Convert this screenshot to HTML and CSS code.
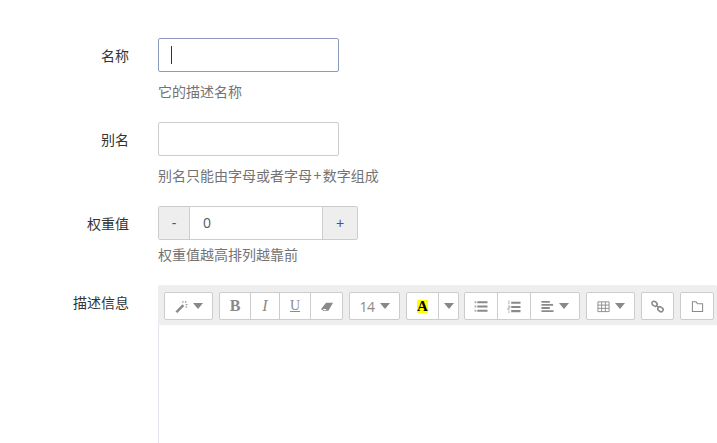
FILE: index.html
```html
<!DOCTYPE html>
<html lang="zh">
<head>
<meta charset="utf-8">
<title>表单</title>
<link rel="stylesheet" href="styles.css">
</head>
<body>
<form class="form">
  <div class="row row-name">
    <label class="label">名称</label>
    <div class="field">
      <div class="input input-focus"><span class="caret-line"></span></div>
      <p class="help">它的描述名称</p>
    </div>
  </div>
  <div class="row row-alias">
    <label class="label">别名</label>
    <div class="field">
      <div class="input"></div>
      <p class="help">别名只能由字母或者字母<span class="plus">+</span>数字组成</p>
    </div>
  </div>
  <div class="row row-weight">
    <label class="label">权重值</label>
    <div class="field">
      <div class="stepper">
        <span class="step step-minus">-</span>
        <span class="step-value">0</span>
        <span class="step step-plus">+</span>
      </div>
      <p class="help help-tight">权重值越高排列越靠前</p>
    </div>
  </div>
  <div class="row row-editor">
    <label class="label label-editor">描述信息</label>
    <div class="editor">
      <div class="toolbar">
        <div class="group">
          <span class="btn w-49"><svg class="ico" viewBox="0 0 14 14"><path d="M0.5 12.5 L8 4.5 L10 6.5 L2.5 14 Z" fill="#8a8a8a"/><path d="M8.5 1 V3 M12 1 L11 3 M13.5 5 H11.5 M13 8 L11.5 7" stroke="#a0a0a0" stroke-width="1.3" fill="none"/></svg><i class="tri"></i></span>
        </div>
        <div class="group">
          <span class="btn w-32 txt bold">B</span>
          <span class="btn w-29 txt ital">I</span>
          <span class="btn w-32 txt under">U</span>
          <span class="btn w-33"><svg class="ico ico-wide" viewBox="0 0 14 14"><path d="M0.5 10 L6 3 H13.5 L8.5 11.5 H3 Z" fill="#8a8a8a"/><path d="M2.3 9.6 H6.6 L5.6 10.8 H3.4 Z" fill="#fff"/></svg></span>
        </div>
        <div class="group">
          <span class="btn w-51"><span class="size">14</span><i class="tri"></i></span>
        </div>
        <div class="group">
          <span class="btn w-33"><span class="color-a">A</span></span>
          <span class="btn w-20"><i class="tri tri-solo"></i></span>
        </div>
        <div class="group group-pull">
          <span class="btn w-34"><svg class="ico ico-wide" viewBox="0 0 14 14"><path d="M0 2.5 H2 M0 7 H2 M0 11.5 H2" stroke="#b0b0b0" stroke-width="2.2"/><path d="M3 2.5 H14 M3 7 H14 M3 11.5 H14" stroke="#8a8a8a" stroke-width="2.2"/></svg></span>
          <span class="btn w-34"><svg class="ico ico-wide" viewBox="0 0 14 14"><path d="M1.5 0.5 V4.5 M0.5 6.5 H2.5 V8.5 H0.5 V10.5 H2.5 M0.5 13 H2.5" stroke="#a8a8a8" stroke-width="1" fill="none"/><path d="M4 3 H14 M4 7.5 H14 M4 12 H14" stroke="#8a8a8a" stroke-width="2.2"/></svg></span>
          <span class="btn w-48"><svg class="ico" viewBox="0 0 14 14"><path d="M0.5 2 H9.5 M0.5 5.3 H13 M0.5 8.6 H9.5 M0.5 12 H13.5" stroke="#8a8a8a" stroke-width="2"/></svg><i class="tri"></i></span>
        </div>
        <div class="group">
          <span class="btn w-49"><svg class="ico" viewBox="0 0 14 14"><path d="M1 2 H13 V12.5 H1 Z M1 5.5 H13 M1 9 H13 M5 2 V12.5 M9 2 V12.5" stroke="#8a8a8a" stroke-width="1" fill="none"/></svg><i class="tri"></i></span>
        </div>
        <div class="group">
          <span class="btn w-33"><svg class="ico" viewBox="0 0 14 14"><rect x="0.8" y="1.8" width="6" height="4.4" rx="2.2" transform="rotate(40 3.8 4)" stroke="#8a8a8a" stroke-width="1.7" fill="none"/><rect x="7.2" y="7.8" width="6" height="4.4" rx="2.2" transform="rotate(40 10.2 10)" stroke="#8a8a8a" stroke-width="1.7" fill="none"/><path d="M5.7 5.7 L8.3 8.3" stroke="#8a8a8a" stroke-width="1.5"/></svg></span>
        </div>
        <div class="group">
          <span class="btn w-34"><svg class="ico" viewBox="0 0 14 14"><path d="M1.5 2 H5.5 L7 4 H12.5 V12.5 H1.5 Z" stroke="#8a8a8a" stroke-width="1.1" fill="none"/></svg></span>
        </div>
      </div>
      <div class="body"></div>
    </div>
  </div>
</form>
</body>
</html>
```
FILE: styles.css
```css
* { box-sizing: border-box; }
html, body { margin: 0; padding: 0; height: 100%; overflow: hidden; background: #fff; }
body { font-family: "Noto Sans CJK SC", "Liberation Sans", sans-serif; font-size: 14px; color: #333; }
.form { padding-top: 38px; width: 717px; }
.row { display: flex; align-items: flex-start; }
.row-name, .row-alias { height: 84px; }
.row-weight { height: 79px; }
.label { width: 129px; text-align: right; padding-top: 7px; line-height: 20px; margin-right: 29px; flex: none; }
.label-editor { padding-top: 7px; }
.field { width: 300px; }
.input { width: 181px; height: 34px; border: 1px solid #ccc; border-radius: 2px; background: #fff; display: flex; align-items: center; padding-left: 12px; }
.input-focus { border-color: #8c9bbd; }
.caret-line { width: 1px; height: 18px; background: #333; }
.help { margin: 9px 0 0; color: #737373; line-height: 20px; white-space: nowrap; }
.help-tight { margin-top: 4px; }
.plus { padding: 0 1.5px; }
.stepper { display: flex; width: 200px; height: 34px; border: 1px solid #ccc; border-radius: 2px; }
.step { background: #eee; display: flex; align-items: center; justify-content: center; color: #555; font-family: "Liberation Sans", sans-serif; }
.step-minus { width: 31px; border-right: 1px solid #ccc; }
.step-plus { width: 35px; border-left: 1px solid #ccc; color: #44557a; }
.step-value { flex: 1; padding-left: 13px; line-height: 32px; color: #4f5b66; font-family: "Open Sans", sans-serif; }
.editor { width: 559px; flex: none; }
.toolbar { display: flex; gap: 6px; height: 40px; padding: 7px 0 0 6px; background: #eee; border-radius: 2px 2px 0 0; }
.group { display: flex; height: 28px; flex: none; }
.group-pull { margin-left: -1px; }
.btn { display: flex; align-items: center; justify-content: center; gap: 4px; height: 28px; background: #fff; border: 1px solid #ccc; margin-left: -1px; color: #8a8a8a; flex: none; }
.group .btn:first-child { margin-left: 0; border-radius: 2px 0 0 2px; }
.group .btn:last-child { border-radius: 0 2px 2px 0; }
.group .btn:only-child { border-radius: 2px; }
.w-20 { width: 21px; }
.w-29 { width: 30px; }
.w-32 { width: 32px; }
.w-33 { width: 33px; }
.w-34 { width: 34px; }
.w-48 { width: 50px; }
.w-49 { width: 49px; }
.w-51 { width: 51px; }
.ico { width: 13px; height: 13px; display: block; }
.ico-wide { width: 14px; height: 13px; }
.tri { width: 0; height: 0; margin-left: 1px; border-left: 5px solid transparent; border-right: 5px solid transparent; border-top: 6px solid #888; }
.tri-solo { margin-left: 0; }
.txt { font-family: "Liberation Serif", serif; font-size: 16px; }
.bold { font-weight: 700; }
.ital { font-style: italic; }
.under { text-decoration: underline; font-size: 14px; }
.size { font-family: "Open Sans", sans-serif; font-size: 14px; letter-spacing: -0.5px; }
.color-a { font-family: "Liberation Serif", serif; font-weight: 700; font-size: 15px; line-height: 13px; padding: 0 0.5px; color: #000; background: #ff0; }
.body { height: 118px; border-left: 1px solid #e3e3f0; background: #fff; }
```
